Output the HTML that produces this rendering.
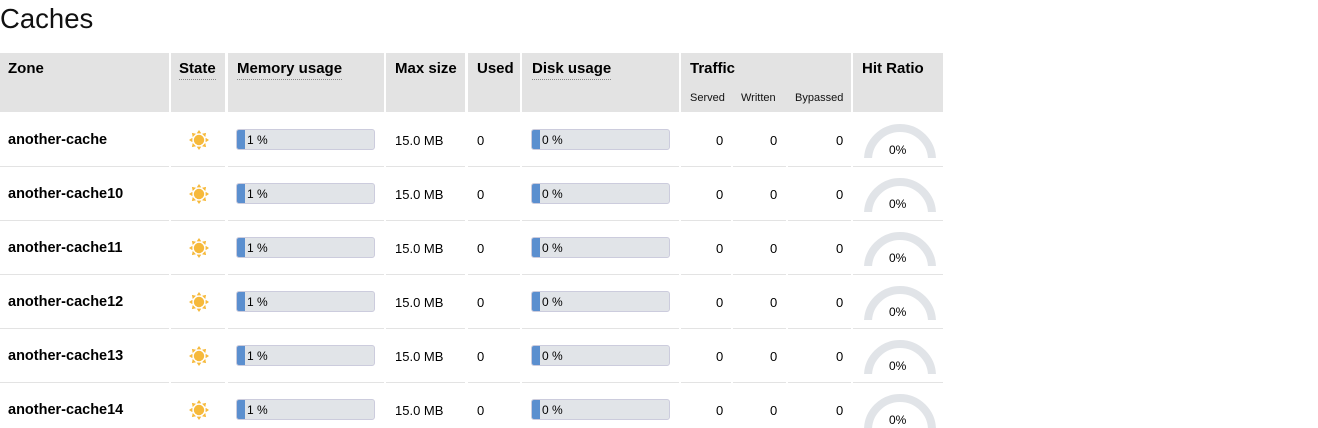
<!DOCTYPE html>
<html><head><style>
body{margin:0;background:#fff;font-family:"Liberation Sans",sans-serif;color:#000;width:1318px;height:428px;overflow:hidden;position:relative}
h1{position:absolute;left:0;top:3px;margin:0;font-weight:300;font-size:27.5px;color:#111}
.hd{position:absolute;top:53px;height:59px;background:#e3e3e3}
.ht{position:absolute;top:60px;font-weight:bold;font-size:15px}
.dot{border-bottom:1px dotted #888;padding-bottom:2px}
.sub{position:absolute;top:92px;font-size:11px;color:#111}
.line{position:absolute;height:1px;background:#e3e3e3}
.t{position:absolute;font-size:13px}
.zn{position:absolute;font-size:14.5px;font-weight:bold;left:8px}
.bar{position:absolute;width:139px;height:21px;background:#e1e4e8;border-radius:3px;border:1px solid #ccd;box-sizing:border-box;overflow:hidden}
.bar i{position:absolute;left:0;top:0;bottom:0;width:8px;background:#5b8fcf}
.bar span{position:absolute;left:10px;top:3px;font-size:12px}
</style></head><body>
<h1>Caches</h1>
<div class="hd" style="left:0;width:169px"></div>
<div class="hd" style="left:171px;width:54px"></div>
<div class="hd" style="left:228px;width:156px"></div>
<div class="hd" style="left:386px;width:79px"></div>
<div class="hd" style="left:468px;width:52px"></div>
<div class="hd" style="left:522px;width:157px"></div>
<div class="hd" style="left:681px;width:170px"></div>
<div class="hd" style="left:853px;width:90px"></div>
<div class="ht" style="left:8px">Zone</div>
<div class="ht" style="left:179px"><span class="dot">State</span></div>
<div class="ht" style="left:237px"><span class="dot">Memory usage</span></div>
<div class="ht" style="left:395px">Max size</div>
<div class="ht" style="left:477px">Used</div>
<div class="ht" style="left:532px"><span class="dot">Disk usage</span></div>
<div class="ht" style="left:690px">Traffic</div>
<div class="ht" style="left:862px">Hit Ratio</div>
<div class="sub" style="left:690px">Served</div>
<div class="sub" style="left:741px">Written</div>
<div class="sub" style="left:795px">Bypassed</div>
<div id="rows"></div>
<script>
var names=["another-cache","another-cache10","another-cache11","another-cache12","another-cache13","another-cache14"];
var h="";
names.forEach(function(n,i){
var y=113+i*54,c=y+28;
h+='<div class="zn" style="top:'+(c-9)+'px">'+n+'</div>';
h+='<svg style="position:absolute;left:188px;top:'+(c-12)+'px" width="22" height="22" viewBox="-11 -11 22 22"><circle r="5.2" fill="#f6b93b"/><g fill="#f6b93b">'+[0,45,90,135,180,225,270,315].map(function(a){return '<polygon points="-2.3,-6.6 2.3,-6.6 0,-10" transform="rotate('+a+')"/>'}).join('')+'</g></svg>';
h+='<div class="bar" style="left:236px;top:'+(c-12)+'px"><i></i><span>1 %</span></div>';
h+='<div class="t" style="left:395px;top:'+(c-8)+'px">15.0 MB</div>';
h+='<div class="t" style="left:477px;top:'+(c-8)+'px">0</div>';
h+='<div class="bar" style="left:531px;top:'+(c-12)+'px"><i></i><span>0 %</span></div>';
h+='<div class="t" style="left:716px;top:'+(c-8)+'px">0</div>';
h+='<div class="t" style="left:770px;top:'+(c-8)+'px">0</div>';
h+='<div class="t" style="left:836px;top:'+(c-8)+'px">0</div>';
h+='<svg style="position:absolute;left:864px;top:'+(y+9)+'px" width="72" height="36"><path d="M4 38 A32 32 0 0 1 68 38" fill="none" stroke="#e1e4e8" stroke-width="8"/></svg>';
h+='<div class="t" style="left:889px;top:'+(y+30)+'px;font-size:12px">0%</div>';
if(i<5){[[0,169],[171,54],[228,156],[386,79],[468,52],[522,157],[681,50],[733,53],[788,63],[853,90]].forEach(function(s){h+='<div class="line" style="top:'+(y+53)+'px;left:'+s[0]+'px;width:'+s[1]+'px"></div>'});}
});
document.getElementById("rows").innerHTML=h;
</script>
</body></html>
